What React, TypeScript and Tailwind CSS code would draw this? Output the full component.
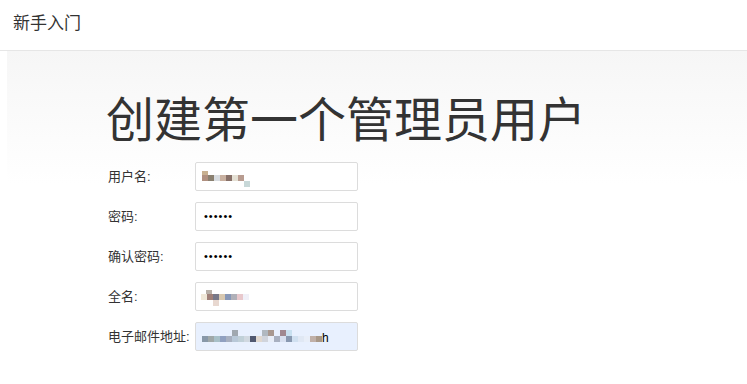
import type React from "react";

// pixelated (redacted) input values, one colour per 6px cell
type Cell = { x: number; y: number; c: string };

const row = (x0: number, y: number, colors: string[]): Cell[] =>
  colors.map((c, i) => ({ x: x0 + i * 6, y, c }));

const userCells: Cell[] = [
  { x: 6, y: 8, c: "#c8b090" },
  ...row(6, 12, ["#b09080", "#8a8070", "#d8dce0", "#c8b0a0", "#887068", "#e4e0d4", "#b89c90"]),
  { x: 48, y: 18, c: "#c8d8d8" },
];

const nameCells: Cell[] = [
  { x: 10, y: 7, c: "#b8b0a8" },
  ...row(5, 11, ["#f0e8d8", "#a08078", "#787888", "#d8c8b0", "#8898b8", "#b0b0b8", "#e8c8cc", "#f0f0f8"]),
  { x: 17, y: 17, c: "#e8d8d0" },
];

const emailCells: Cell[] = [
  ...[
    { x: 36, c: "#a0a8b0" },
    { x: 66, c: "#b0b8c0" },
    { x: 72, c: "#a89890" },
    { x: 84, c: "#a08890" },
    { x: 90, c: "#c8e0f0" },
  ].map((p) => ({ ...p, y: 7 })),
  ...row(6, 13, [
    "#8898a8", "#a0a8a8", "#a8c0c8", "#90a0c0", "#a8b0c0", "#b8c8d8",
    "#c0d0d8", "#d0d8e0", "#505870", "#e0d8d0", "#d0d4dc", "#e8eef8",
    "#a8b0c0", "#d8e0f0", "#8898b0", "#d0e0f0", "#e0e8f4", "#e8eef8",
    "#c0b0a8", "#a89888",
  ]),
];

const Mosaic: React.FC<{ cells: Cell[]; tail?: string }> = ({ cells, tail }) => (
  <div className="relative h-full w-full">
    {cells.map((cell, i) => (
      <span
        key={i}
        className="absolute h-[6px] w-[6px]"
        style={{ left: cell.x, top: cell.y, background: cell.c }}
      />
    ))}
    {tail && (
      <span className="absolute left-[126px] top-[9px] text-[12px] leading-none text-black">
        {tail}
      </span>
    )}
  </div>
);

interface FieldProps {
  label: string;
  children?: React.ReactNode;
  filled?: boolean;
}

const Field: React.FC<FieldProps> = ({ label, children, filled }) => (
  <div className="flex items-center">
    <label className="w-[87px] text-[13px] text-[#333]">{label}</label>
    <div
      className={`h-[29px] w-[163px] rounded-[2px] border border-[#dcdcdc] ${
        filled ? "bg-[#e8f0fe]" : "bg-white"
      }`}
    >
      {children}
    </div>
  </div>
);

const Dots = () => (
  <div className="flex h-full items-center pl-[8px] text-[11px] leading-none tracking-[1px] text-black">
    ••••••
  </div>
);

export default function App() {
  return (
    <div
      className="h-[384px] w-[747px] overflow-hidden bg-white"
      style={{ fontFamily: '"Liberation Sans", "Noto Sans CJK SC", sans-serif' }}
    >
      <header className="flex h-[51px] items-center border-b border-[#e6e6e6] pl-[13px] pb-[3px]">
        <span className="text-[17px] text-[#333]">新手入门</span>
      </header>

      <div className="ml-[7px] h-[333px] bg-gradient-to-b from-[#f6f6f6] to-white to-[40%] pl-[99px] pt-[46px]">
        <h1 className="text-[48px] font-normal leading-none text-[#333]">
          创建第一个管理员用户
        </h1>

        <div className="mt-[17px] flex flex-col gap-[11px] pl-[2px]">
          <Field label="用户名:">
            <Mosaic cells={userCells} />
          </Field>
          <Field label="密码:">
            <Dots />
          </Field>
          <Field label="确认密码:">
            <Dots />
          </Field>
          <Field label="全名:">
            <Mosaic cells={nameCells} />
          </Field>
          <Field label="电子邮件地址:" filled>
            <Mosaic cells={emailCells} tail="h" />
          </Field>
        </div>
      </div>
    </div>
  );
}
